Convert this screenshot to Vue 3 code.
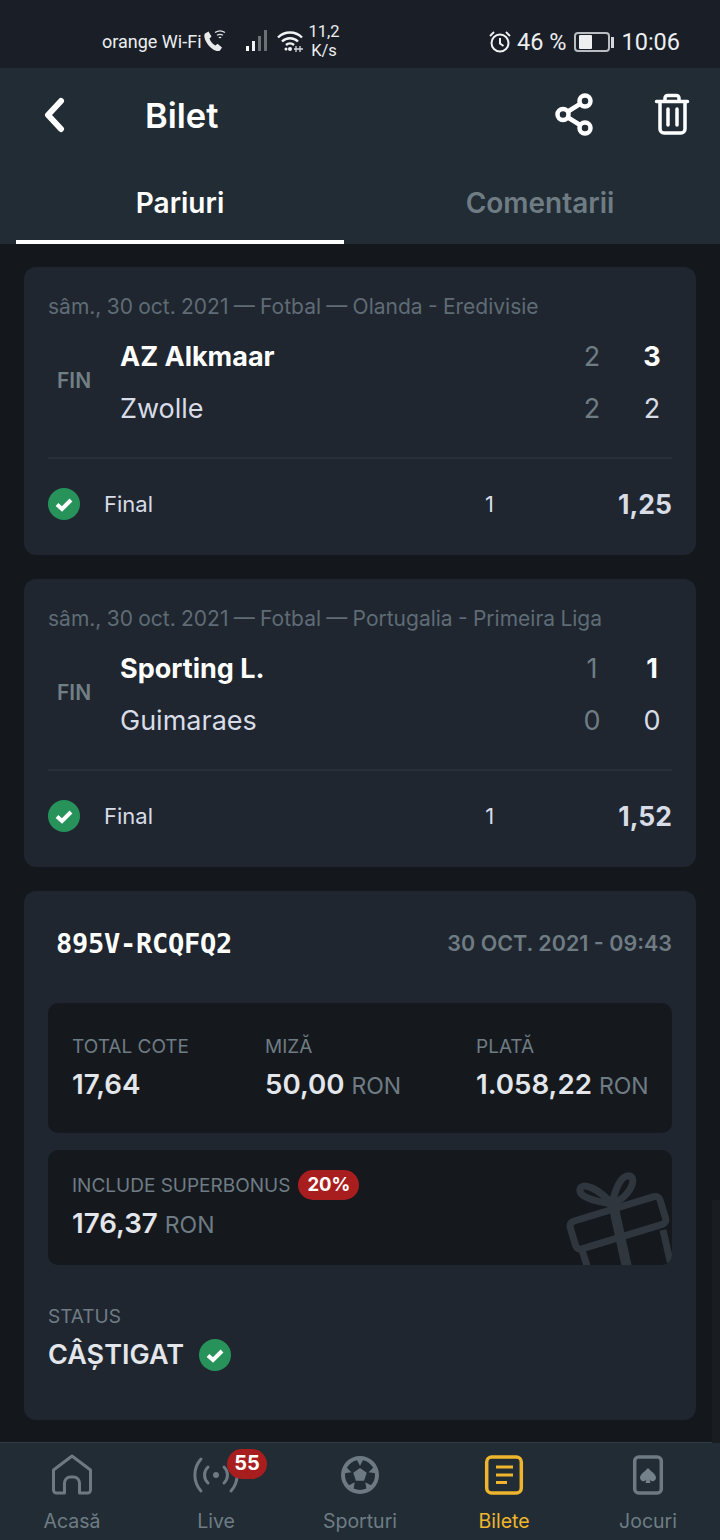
<template>
  <div class="page">
    <div class="status">
      <div class="status-left">
        <span class="carrier">orange Wi-Fi</span>
        <svg class="call" width="24" height="24" viewBox="0 0 24 24">
          <path d="M3 4.500 6.500 2.500 9.500 7.500 7.500 9.500C8.500 12.500 10.500 15 13.500 16.500L15.500 14.800 20 18.500 18 21.500C15 23.500 9 20 5.500 15 2.500 10.500 1.500 6.500 3 4.500Z" fill="#e8eaec"/>
          <path d="M13 3.500A9 9 0 0 1 23 3.500M15 6.200A6 6 0 0 1 21 6.200M16.800 8.600A3 3 0 0 1 19.200 8.600" fill="none" stroke="#dfe2e5" stroke-width="1.200"/>
        </svg>
        <svg class="signal" width="25" height="24" viewBox="0 0 25 24">
          <rect x="1" y="17" width="3" height="5" fill="#fff"/>
          <rect x="7" y="12" width="3" height="10" fill="#f1f2f3"/>
          <rect x="13" y="7" width="3" height="15" fill="#6a7076"/>
          <rect x="19" y="1" width="3" height="21" fill="#6a7076"/>
        </svg>
        <svg class="wifi" width="30" height="24" viewBox="0 0 30 24">
          <path d="M2 8.500A17 17 0 0 1 26 8.500M6 12.500A11.500 11.500 0 0 1 22 12.500M10 16A6 6 0 0 1 18 16" fill="none" stroke="#f1f2f3" stroke-width="2.400"/>
          <circle cx="14" cy="20" r="2" fill="#f1f2f3"/>
          <circle cx="10" cy="20" r="1.500" fill="#f1f2f3"/>
          <path d="M20 17v6M24 17v6M18 20h9" stroke="#d8dbde" stroke-width="1.300"/>
        </svg>
        <div class="speed"><span>11,2</span><span>K/s</span></div>
      </div>
      <div class="status-right">
        <svg class="alarm" width="24" height="24" viewBox="0 0 24 24" fill="none" stroke="#f1f2f3">
          <circle cx="12" cy="13" r="8.500" stroke-width="2"/>
          <path d="M12 8v5.500l3.500 2.500" stroke-width="2"/>
          <path d="M2 6 6 2M22 6 18 2" stroke-width="1.800"/>
        </svg>
        <span class="pct">46 %</span>
        <div class="battery"><div class="battery-level"></div></div>
        <div class="battery-tip"></div>
        <span class="clock">10:06</span>
      </div>
    </div>

    <header class="header">
      <div class="toolbar">
        <svg class="back" width="24" height="36" viewBox="0 0 24 36" fill="none">
          <path d="M19 4 6 18l13 14" stroke="#fff" stroke-width="6" stroke-linecap="round" stroke-linejoin="round"/>
        </svg>
        <h1 class="title">Bilet</h1>
        <svg class="share" width="40" height="44" viewBox="0 0 40 44" fill="none" stroke="#fff" stroke-width="4.500">
          <circle cx="30" cy="8" r="5.500"/>
          <circle cx="8" cy="21.500" r="5.500"/>
          <circle cx="30" cy="35" r="5.500"/>
          <path d="M13 18.500 25 11M13 24.500 25 32"/>
        </svg>
        <svg class="trash" width="36" height="44" viewBox="0 0 36 44" fill="none" stroke="#fff" stroke-width="3.500" stroke-linecap="round" stroke-linejoin="round">
          <path d="M2.500 8.500h31M11 8V5a2.500 2.500 0 0 1 2.500-2.500h9A2.500 2.500 0 0 1 25 5v3M6 9v27a4 4 0 0 0 4 4h17a4 4 0 0 0 4-4V9M14 16v16M23 16v16"/>
        </svg>
      </div>
      <div class="tabs">
        <div class="tab active">Pariuri</div>
        <div class="tab">Comentarii</div>
      </div>
    </header>

    <main class="content">
      <section class="card match" v-for="m in matches" :key="m.home">
        <div class="meta">{{ m.meta }}</div>
        <div class="teams">
          <div class="fin">FIN</div>
          <div class="rows">
            <div class="row winner">
              <span class="team">{{ m.home }}</span>
              <span class="ht">{{ m.homeHt }}</span>
              <span class="ft">{{ m.homeFt }}</span>
            </div>
            <div class="row">
              <span class="team">{{ m.away }}</span>
              <span class="ht">{{ m.awayHt }}</span>
              <span class="ft">{{ m.awayFt }}</span>
            </div>
          </div>
        </div>
        <div class="pick">
          <svg class="check" width="32" height="32" viewBox="0 0 32 32">
            <circle cx="16" cy="16" r="16" fill="#27935a"/>
            <path d="M9 16.500l5 4.500 9-9" fill="none" stroke="#fff" stroke-width="4"/>
          </svg>
          <span class="market">Final</span>
          <span class="sel">1</span>
          <span class="odd">{{ m.odd }}</span>
        </div>
      </section>

      <section class="card summary">
        <div class="summary-top">
          <span class="code">895V-RCQFQ2</span>
          <span class="date">30 OCT. 2021 - 09:43</span>
        </div>
        <div class="box totals">
          <div class="col col-a">
            <div class="label">TOTAL COTE</div>
            <div class="value">17,64</div>
          </div>
          <div class="col col-b">
            <div class="label">MIZĂ</div>
            <div class="value">50,00 <small>RON</small></div>
          </div>
          <div class="col">
            <div class="label">PLATĂ</div>
            <div class="value">1.058,22 <small>RON</small></div>
          </div>
        </div>
        <div class="box bonus">
          <div class="bonus-head">
            <span class="label">INCLUDE SUPERBONUS</span>
            <span class="bonus-badge">20%</span>
          </div>
          <div class="value">176,37 <small>RON</small></div>
          <svg class="gift" width="130" height="110" viewBox="0 0 130 110" fill="none" stroke="#2f363e" stroke-width="7" stroke-linejoin="round">
            <rect x="21" y="48" width="94" height="29" rx="5" transform="rotate(-17 69 63)"/>
            <path d="M32 90 39 112M113 70 121 105"/>
            <path d="M63 44 78 112" stroke-width="10"/>
            <path d="M62 44C50 42 28 38 30 29 33 21 50 30 62 44ZM62 44C65 30 71 14 80 16 88 20 78 38 62 44Z"/>
          </svg>
        </div>
        <div class="status-block">
          <div class="label">STATUS</div>
          <div class="won">
            <span>CÂȘTIGAT</span>
            <svg width="32" height="32" viewBox="0 0 32 32">
              <circle cx="16" cy="16" r="16" fill="#27935a"/>
              <path d="M9 16.500l5 4.500 9-9" fill="none" stroke="#fff" stroke-width="4"/>
            </svg>
          </div>
        </div>
      </section>
      <div class="scrollbar"></div>
    </main>

    <nav class="nav">
      <div class="nav-item">
        <svg width="44" height="44" viewBox="0 0 44 44" fill="none" stroke="#6d7983" stroke-width="3" stroke-linejoin="round">
          <path d="M3.500 17 22 3l18.500 14v20a3 3 0 0 1-3 3H29.500V30a6 6 0 0 0-6-6h-3a6 6 0 0 0-6 6v10H6.500a3 3 0 0 1-3-3Z"/>
        </svg>
        <span>Acasă</span>
      </div>
      <div class="nav-item">
        <svg width="48" height="44" viewBox="0 0 48 44" fill="none" stroke="#6d7983" stroke-width="3" stroke-linecap="round">
          <circle cx="24" cy="22" r="3" fill="#6d7983" stroke="none"/>
          <path d="M16 14A11 11 0 0 0 16 30M32 14A11 11 0 0 1 32 30M9 6A24 24 0 0 0 9 38M39 6A24 24 0 0 1 39 38"/>
        </svg>
        <span>Live</span>
        <b class="nav-badge">55</b>
      </div>
      <div class="nav-item">
        <svg width="44" height="44" viewBox="0 0 44 44">
          <circle cx="22" cy="22" r="19" fill="#6d7983"/>
          <circle cx="22" cy="22" r="15" fill="#222c35"/>
          <polygon v-for="a in ballAngles" :key="a" points="22,13 18,5 26,5" fill="#6d7983" :transform="`rotate(${a} 22 22)`"/>
          <polygon points="22,15 28.700,19.800 26.100,27.700 17.900,27.700 15.300,19.800" fill="#6d7983"/>
        </svg>
        <span>Sporturi</span>
      </div>
      <div class="nav-item current">
        <svg width="44" height="44" viewBox="0 0 44 44" fill="none" stroke="#eeb52d" stroke-width="3.500">
          <rect x="4.700" y="4" width="34.600" height="36" rx="5"/>
          <path d="M14 14h17M14 22h17M14 29.500h11" stroke-width="3"/>
        </svg>
        <span>Bilete</span>
      </div>
      <div class="nav-item">
        <svg width="44" height="44" viewBox="0 0 44 44">
          <rect x="8.700" y="4" width="26.600" height="36" rx="4" fill="none" stroke="#6d7983" stroke-width="3.500"/>
          <path d="M22 15c3 3.500 8 6 8 10a3.500 3.500 0 0 1-6.500 1.500l1 3.500h-5l1-3.500A3.500 3.500 0 0 1 14 25c0-4 5-6.500 8-10Z" fill="#76828b"/>
        </svg>
        <span>Jocuri</span>
      </div>
    </nav>
  </div>
</template>

<script setup>
const matches = [
  {
    meta: 'sâm., 30 oct. 2021 — Fotbal — Olanda - Eredivisie',
    home: 'AZ Alkmaar',
    away: 'Zwolle',
    homeHt: 2,
    homeFt: 3,
    awayHt: 2,
    awayFt: 2,
    odd: '1,25',
  },
  {
    meta: 'sâm., 30 oct. 2021 — Fotbal — Portugalia - Primeira Liga',
    home: 'Sporting L.',
    away: 'Guimaraes',
    homeHt: 1,
    homeFt: 1,
    awayHt: 0,
    awayFt: 0,
    odd: '1,52',
  },
]

const ballAngles = [0, 72, 144, 216, 288]
</script>

<style>
html,
body {
  margin: 0;
  background: #14181c;
}
</style>

<style scoped>
.page {
  width: 720px;
  height: 1540px;
  display: flex;
  flex-direction: column;
  overflow: hidden;
  background: #14181c;
  font-family: Inter, "Liberation Sans", sans-serif;
  color: #fff;
}

/* status bar */
.status {
  height: 68px;
  box-sizing: border-box;
  flex: none;
  display: flex;
  justify-content: space-between;
  align-items: center;
  padding: 14px 40px 0 102px;
  background: #1a1f27;
  font-family: Roboto, sans-serif;
  color: #eceef0;
}
.status-left,
.status-right {
  display: flex;
  align-items: center;
}
.status-right {
  margin-top: 2px;
}
.carrier {
  font-size: 18px;
}
.call {
  margin-right: 19px;
}
.signal {
  margin-right: 6px;
}
.speed {
  display: flex;
  flex-direction: column;
  align-items: center;
  margin-left: 3px;
  font-size: 16.5px;
  line-height: 19px;
}
.pct {
  font-size: 23.5px;
  margin: 0 8px 0 5px;
}
.battery {
  width: 36px;
  height: 20px;
  box-sizing: border-box;
  border: 2px solid #b9bdc2;
  border-radius: 4px;
  padding: 1px 3px;
}
.battery-level {
  width: 13px;
  height: 14px;
  background: #eceef0;
  border-radius: 1px;
}
.battery-tip {
  width: 3px;
  height: 11px;
  margin: 0 7px 0 1px;
  background: #d5d8db;
}
.clock {
  font-size: 23.5px;
}

/* header */
.header {
  flex: none;
  height: 176px;
  display: flex;
  flex-direction: column;
  background: #222c35;
}
.toolbar {
  height: 94px;
  display: flex;
  align-items: center;
  padding: 0 30px 0 42px;
}
.title {
  margin: 0 0 0 79px;
  flex: 1;
  font-size: 34.500px;
  font-weight: 600;
}
.share {
  margin-right: 59px;
}
.tabs {
  flex: 1;
  display: grid;
  grid-template-columns: 328px 1fr;
  padding: 0 16px;
  gap: 32px;
}
.tab {
  font-size: 28px;
  font-weight: 600;
  color: #6f7c84;
  text-align: center;
  padding-top: 24px;
}
.tab.active {
  color: #fff;
  height: 54px;
  border-bottom: 4px solid #fff;
}

/* cards */
.content {
  flex: 1;
  position: relative;
  display: flex;
  flex-direction: column;
  gap: 24px;
  padding: 23px 24px 0;
}
.card {
  background: #1f262f;
  border-radius: 12px;
  padding: 0 24px;
}
.match {
  height: 288px;
  box-sizing: border-box;
  padding-top: 27px;
}
.meta {
  font-size: 21px;
  line-height: 26px;
  word-spacing: -0.6px;
  color: #5f6b75;
}
.teams {
  display: flex;
  align-items: center;
  margin-top: 10px;
  padding-bottom: 23px;
  border-bottom: 2px solid #28303a;
}
.fin {
  width: 72px;
  padding: 0 0 4px 9px;
  box-sizing: border-box;
  font-size: 21px;
  font-weight: 600;
  color: #727f85;
}
.rows {
  flex: 1;
}
.row {
  display: flex;
  align-items: center;
  height: 52px;
  font-size: 27px;
  color: #d8dce6;
}
.team {
  flex: 1;
}
.row.winner .team {
  font-weight: 700;
  color: #fff;
}
.ht,
.ft {
  width: 40px;
  text-align: center;
}
.ht {
  color: #6f7c84;
}
.ft {
  margin-left: 20px;
}
.row.winner .ft {
  font-weight: 700;
  color: #fff;
}
.pick {
  display: flex;
  align-items: center;
  margin-top: 29px;
}
.market {
  margin-left: 24px;
  flex: 1;
  font-size: 22px;
  color: #d8dce6;
}
.sel {
  width: 133px;
  font-size: 22px;
  color: #d8dce6;
}
.odd {
  font-size: 26.500px;
  font-weight: 700;
  color: #d8dce6;
}

/* summary */
.summary {
  height: 529px;
  box-sizing: border-box;
  padding-top: 36px;
}
.summary-top {
  display: flex;
  justify-content: space-between;
  align-items: center;
  height: 32px;
  padding-left: 8px;
}
.code {
  font-family: "DejaVu Sans Mono", monospace;
  font-size: 27px;
  font-weight: 700;
  letter-spacing: -0.25px;
}
.date {
  font-size: 21.500px;
  font-weight: 600;
  color: #6f7c84;
}
.box {
  background: #15191e;
  border-radius: 10px;
}
.totals {
  height: 130px;
  box-sizing: border-box;
  display: flex;
  margin-top: 44px;
  padding: 31px 24px 0;
}
.col {
  flex: none;
}
.col-a {
  width: 193px;
}
.col-b {
  width: 211px;
}
.label {
  font-size: 19px;
  line-height: 26px;
  color: #6f7c84;
}
.value {
  font-size: 27.700px;
  line-height: 32px;
  font-weight: 600;
  color: #e3e6ea;
  margin-top: 8px;
  white-space: nowrap;
}
.value small {
  font-size: 23px;
  font-weight: 400;
  color: #6f7c84;
}
.bonus {
  position: relative;
  height: 115px;
  box-sizing: border-box;
  margin-top: 17px;
  padding: 22px 24px 0;
  overflow: hidden;
}
.bonus-head {
  display: flex;
  align-items: center;
  gap: 8px;
}
.bonus .value {
  margin-top: 7px;
}
.bonus-badge {
  width: 61px;
  height: 30px;
  margin-top: -2px;
  border-radius: 15px;
  background: #a81e1e;
  color: #fff;
  font-size: 18.500px;
  font-weight: 700;
  line-height: 28px;
  text-align: center;
}
.gift {
  position: absolute;
  right: -8px;
  bottom: -5px;
}
.status-block {
  margin-top: 39px;
}
.won {
  display: flex;
  align-items: center;
  gap: 15px;
  margin-top: 8px;
  font-size: 27px;
  font-weight: 600;
  color: #e3e6ea;
}
.scrollbar {
  position: absolute;
  top: 956px;
  right: 0;
  width: 8px;
  height: 243px;
  background: #191d21;
}

/* bottom nav */
.nav {
  flex: none;
  height: 97px;
  display: grid;
  grid-template-columns: repeat(5, 1fr);
  background: #222c35;
  border-top: 1px solid #333d46;
}
.nav-item {
  position: relative;
  display: flex;
  flex-direction: column;
  align-items: center;
  padding-top: 10px;
  font-size: 19.500px;
  color: #6f7c84;
}
.nav-item span {
  margin-top: 11px;
  line-height: 26px;
}
.nav-item.current {
  color: #eeb52d;
}
.nav-badge {
  position: absolute;
  top: 6px;
  left: 83px;
  width: 40px;
  height: 30px;
  border-radius: 15px;
  background: #a81e1e;
  color: #fff;
  font-size: 20px;
  line-height: 28px;
  text-align: center;
}
</style>
